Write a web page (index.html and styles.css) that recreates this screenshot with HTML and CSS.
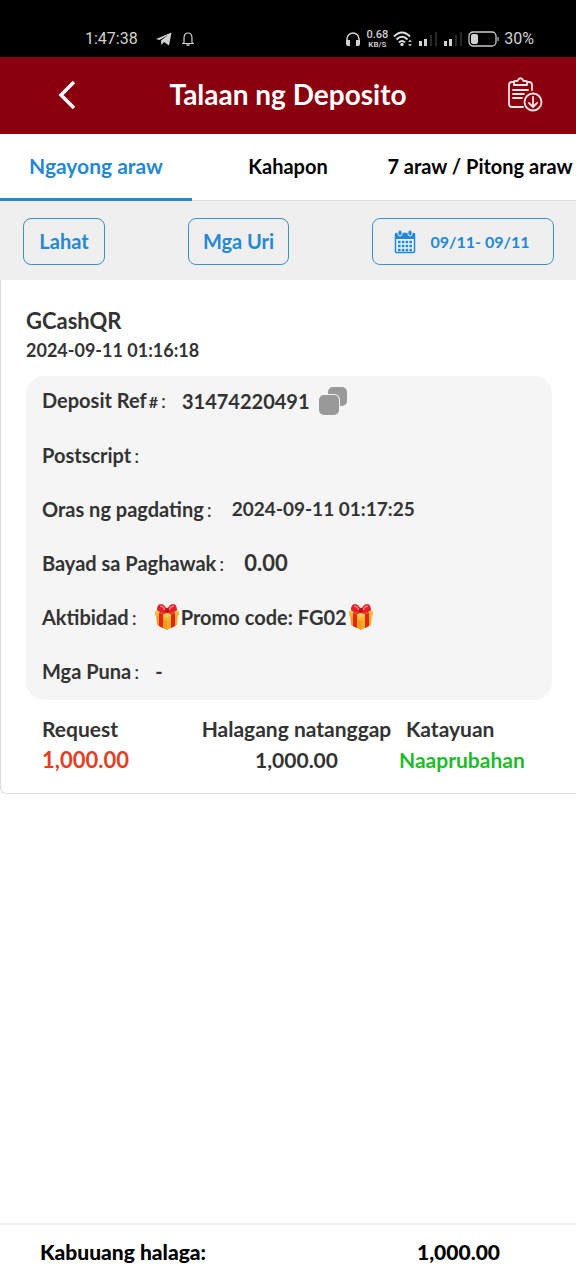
FILE: index.html
```html
<!DOCTYPE html>
<html lang="fil">
<head>
<meta charset="utf-8">
<meta name="viewport" content="width=device-width, initial-scale=1">
<title>Talaan ng Deposito</title>
<link rel="stylesheet" href="styles.css">
</head>
<body>
<svg class="symbols" aria-hidden="true">
  <symbol id="gift" viewBox="0 0 26 28">
    <path d="M2 10 13 15v12L3 22z" fill="#f29a20"/>
    <path d="M24 10 13 15v12l10-5z" fill="#f5a929"/>
    <path d="M1 8 13 4l12 4-12 6z" fill="#ffc84a"/>
    <path d="M1 8v4l12 6 12-6V8l-12 6z" fill="#f9b335"/>
    <path d="M5 9.500l4 2V25l-4-2zM17 11.500l4-2V23l-4 2z" fill="#dc2719"/>
    <path d="M5 9 16 4l4 2-11 5.500zM21 9 10 4 6 6l11 5.500z" fill="#e93425"/>
    <path d="M13 8C9 10 4 9 3 7c0-3 1-6 4-6 3 0 5 3 6 7zM13 8c4 2 9 1 10-1 0-3-1-6-4-6-3 0-5 3-6 7z" fill="#e4202c"/>
    <path d="M6 3c2 0 4 2 5 4M20 3c-2 0-4 2-5 4" fill="none" stroke="#ff7b78" stroke-width="1.500"/>
    <rect x="11" y="5" width="4" height="5" rx="1.500" fill="#b9151e"/>
  </symbol>
</svg>

<div class="status">
  <div class="status-group">
    <span>1:47:38</span>
    <svg class="telegram" width="16" height="14" viewBox="0 0 16 14"><path d="M0 7 15.500.5 13 13.500 8 10l-2.500 3-.5-4.500L12 3 3.500 8z" fill="#d2d2d2"/></svg>
    <svg width="14" height="14" viewBox="0 0 14 14" fill="none" stroke="#d2d2d2" stroke-width="1.200"><path d="M1 11.500h12M2.500 11.500C3.500 10 3 8 3 6c0-3 1.500-5 4-5s4 2 4 5c0 2-.5 4 .5 5.500"/><path d="M5.500 12.500q1.500 1.500 3 0"/></svg>
  </div>
  <div class="status-group status-right">
    <svg width="16" height="16" viewBox="0 0 16 16"><path d="M2 12V8a6 6 0 0 1 12 0v4" fill="none" stroke="#d2d2d2" stroke-width="1.500"/><path d="M1 9h4v6H3q-2 0-2-2zM15 9h-4v6h2q2 0 2-2z" fill="#d2d2d2"/></svg>
    <span class="speed"><b>0.68</b><small>KB/S</small></span>
    <svg width="20" height="16" viewBox="0 0 20 16"><g fill="none" stroke="#dedede" stroke-width="2"><path d="M1 5.500q8-8 16 0M3.500 8.500q5.500-5.500 11 0M6 11.500q3-3 6 0"/></g><circle cx="9" cy="13.500" r="1.700" fill="#dedede"/><path d="m15 11 2-2.500 2 2.500zM15 13l2 2.500 2-2.500z" fill="#b8b8b8"/></svg>
    <svg width="20" height="16" viewBox="0 0 20 16"><path d="M1 10h3v5H1zM6 8h3v7H6z" fill="#d2d2d2"/><path d="M12 4h2v11h-2zM17 1h2v14h-2z" fill="#292929"/></svg>
    <svg width="20" height="16" viewBox="0 0 20 16"><path d="M1 10h3v5H1zM6 8h3v7H6z" fill="#d2d2d2"/><path d="M12 4h2v11h-2zM17 1h2v14h-2z" fill="#292929"/></svg>
    <svg width="31" height="16" viewBox="0 0 31 16"><rect x="1" y="1" width="27" height="14" rx="4" fill="none" stroke="#c9c9c9" stroke-width="1.300"/><rect x="3" y="3" width="7" height="10" rx="2" fill="#d2d2d2"/><path d="M30 6v4" stroke="#999" stroke-width="1.500"/></svg>
    <span>30%</span>
  </div>
</div>

<header class="header">
  <button class="icon-button" type="button" aria-label="Bumalik"><svg width="18" height="30" viewBox="0 0 18 30"><path d="M16 2 3 15l13 13" fill="none" stroke="#fff" stroke-width="3.500"/></svg></button>
  <h1>Talaan ng Deposito</h1>
  <button class="icon-button" type="button" aria-label="I-download ang talaan"><svg width="36" height="36" viewBox="0 0 36 36" fill="none" stroke="#fbe5e6" stroke-width="1.800" stroke-linecap="round" stroke-linejoin="round"><path d="M7 5H5Q2 5 2 8v19q0 3 3 3h11M20 5h2q3 0 3 3v5"/><path d="M7 8V5q0-1 1-1h2q1 0 1-1 2.500-3.500 5 0 0 1 1 1h2q1 0 1 1v3zM6 13h15M6 17h11M6 21h9"/><circle cx="26" cy="25" r="8.500"/><path d="M26 20v10M22 26l4 4 4-4"/></svg></button>
</header>

<nav class="tabs">
  <button class="tab tab-active" type="button" aria-current="true">Ngayong araw</button>
  <button class="tab" type="button">Kahapon</button>
  <button class="tab" type="button">7 araw / Pitong araw</button>
</nav>

<div class="filters">
  <button class="filter" type="button">Lahat</button>
  <button class="filter filter-wide" type="button">Mga Uri</button>
  <button class="filter filter-date" type="button">
    <svg width="22" height="24" viewBox="0 0 22 24"><rect x="1.500" y="3.500" width="19" height="19" rx="1" fill="#f1f5f8" stroke="#2188d8" stroke-width="1.500"/><path d="M1 3h20v6H1z" fill="#2188d8"/><g fill="#2188d8" stroke="#efefef"><rect x="4" y="0" width="4" height="6" rx="2"/><rect x="14" y="0" width="4" height="6" rx="2"/></g><path d="M4 12h14M4 16h14M4 20h14" stroke="#2188d8" stroke-width="2.400" stroke-dasharray="2.600 1.200"/></svg>
    <span>09/11- 09/11</span>
  </button>
</div>

<main class="main">
  <article class="card">
    <h2>GCashQR</h2>
    <time class="created">2024-09-11 01:16:18</time>
    <dl class="details">
      <div class="row"><dt>Deposit Ref<span class="hash">#</span><span class="colon">:</span></dt><dd>31474220491</dd>
        <dd><button class="copy" type="button" aria-label="Kopyahin"><svg width="30" height="30" viewBox="0 0 30 30"><rect x="10" y="1" width="19" height="19" rx="5" fill="#999"/><rect x="0" y="8" width="22" height="22" rx="6" fill="#f5f5f5"/><rect x="1" y="9" width="20" height="20" rx="5" fill="#999"/></svg></button></dd></div>
      <div class="row"><dt>Postscript<span class="colon">:</span></dt><dd></dd></div>
      <div class="row"><dt>Oras ng pagdating<span class="colon">:</span></dt><dd class="arrival">2024-09-11 01:17:25</dd></div>
      <div class="row"><dt>Bayad sa Paghawak<span class="colon">:</span></dt><dd class="fee">0.00</dd></div>
      <div class="row"><dt>Aktibidad<span class="colon">:</span></dt><dd class="promo"><svg class="gift" role="img" aria-label="Regalo"><use href="#gift"/></svg>Promo code: FG02<svg class="gift" role="img" aria-label="Regalo"><use href="#gift"/></svg></dd></div>
      <div class="row"><dt>Mga Puna<span class="colon">:</span></dt><dd>-</dd></div>
    </dl>
    <table class="summary">
      <thead><tr><th scope="col">Request</th><th scope="col">Halagang natanggap</th><th scope="col">Katayuan</th></tr></thead>
      <tbody><tr><td class="requested">1,000.00</td><td>1,000.00</td><td class="approved">Naaprubahan</td></tr></tbody>
    </table>
  </article>
</main>

<footer class="footer"><span>Kabuuang halaga:</span><strong>1,000.00</strong></footer>
</body>
</html>
```

FILE: styles.css
```css
* { box-sizing: border-box; }
body {
  margin: 0;
  min-height: 100vh;
  display: flex;
  flex-direction: column;
  background: #fff;
  color: #333;
  font: 700 20px/30px Lato, "Liberation Sans", sans-serif;
}
button { margin: 0; padding: 0; border: 0; background: none; color: inherit; font: inherit; cursor: pointer; }
h1, h2, dl, dd { margin: 0; }
svg { flex: none; display: block; }
.symbols { position: absolute; width: 0; height: 0; }

.status {
  height: 57px;
  padding: 22px 42px 0 85px;
  display: flex;
  justify-content: space-between;
  align-items: flex-start;
  background: #000;
  color: #d2d2d2;
  font: 400 16px/34px Roboto, "Liberation Sans", sans-serif;
}
.status-group { display: flex; align-items: center; gap: 9px; }
.telegram { margin-left: 9px; }
.status-right { gap: 5px; }
.speed { display: flex; flex-direction: column; align-items: center; font-size: 11px; line-height: 11px; }
.speed b { font-weight: 500; }
.speed small { font-size: 8px; font-weight: 600; line-height: 9px; }

.header {
  height: 77px;
  padding: 0 31px 0 47px;
  display: flex;
  align-items: center;
  background: #8a000e;
  color: #fff;
}
.header h1 { flex: 1; padding: 0 16px 4px 0; font-size: 28px; line-height: 36px; text-align: center; }
.icon-button { width: 40px; height: 44px; padding-bottom: 2px; display: flex; align-items: center; justify-content: center; }

.tabs {
  height: 67px;
  display: grid;
  grid-template-columns: repeat(3, minmax(0, 1fr));
  color: #000;
}
.tab { padding-bottom: 3px; border-bottom: 1px solid #ddd; white-space: nowrap; }
.tab-active { padding-bottom: 1px; border-bottom: 3px solid #2b86c9; color: #2488d3; font-size: 21px; }

.filters {
  height: 79px;
  padding: 17px 22px 15px 23px;
  display: flex;
  justify-content: space-between;
  background: #efefef;
  color: #2488d3;
}
.filter { width: 82px; padding-bottom: 2px; border: 1px solid #3c92d0; border-radius: 8px; }
.filter-wide { width: 101px; }
.filter-date { width: 182px; padding: 0 2px 0 0; display: flex; align-items: center; justify-content: center; gap: 14px; font-size: 16px; }

.main { flex: 1; }
.card {
  padding: 26px 24px 18px 25px;
  border-left: 1px solid #ddd;
  border-bottom: 1px solid #ddd;
  border-bottom-left-radius: 6px;
}
.card h2 { font-size: 22px; line-height: 30px; }
.created { display: block; font-size: 18px; line-height: 28px; }
.details { margin-top: 12px; padding: 0 16px; border-radius: 18px; background: #f5f5f5; }
.row { height: 54px; padding-bottom: 4px; display: flex; align-items: center; }
.row dt { margin-right: 16px; }
.colon { margin-left: 3px; font-weight: 400; }
.hash { margin-left: 2px; font-size: 16px; }
.row .arrival { margin-left: 4px; font-size: 19px; }
.row .fee { margin-left: 4px; font-size: 22px; }
.copy { display: block; margin-left: 8px; }
.promo { display: flex; align-items: center; }
.gift { width: 28px; height: 28px; }

.summary { width: 100%; margin-top: 13px; border-collapse: collapse; table-layout: fixed; text-align: center; font-size: 21px; }
.summary th, .summary td { padding: 0; line-height: 31px; white-space: nowrap; }
.summary th { font-weight: 700; }
.summary th:first-child, .summary td:first-child { width: 174px; padding-left: 16px; text-align: left; }
.summary th:nth-child(2) { width: 193px; }
.summary th:last-child { padding-left: 13px; text-align: left; }
.summary .requested { color: #e33f25; font-size: 22px; }
.summary .approved { padding-left: 6px; color: #1fba2c; text-align: left; }

.footer {
  height: 57px;
  padding: 0 76px 2px 40px;
  display: flex;
  align-items: center;
  justify-content: space-between;
  border-top: 2px solid #eee;
  color: #000;
  font-size: 21px;
  font-weight: 900;
}
```
